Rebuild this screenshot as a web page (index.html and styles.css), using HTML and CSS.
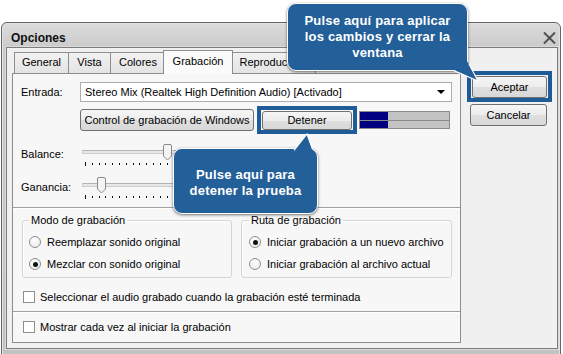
FILE: index.html
```html
<!DOCTYPE html>
<html lang="es">
<head>
  <meta charset="UTF-8" />
  <title>Opciones</title>
  <link rel="stylesheet" href="styles.css">
</head>
<body>
  <div class="window">
    <div class="titlebar">
      <span class="title">Opciones</span>
      <svg class="close" width="13" height="12" viewBox="0 0 13 12"><path d="M1 0.5 L12 11.5 M12 0.5 L1 11.5" stroke="#505050" stroke-width="2"/></svg>
    </div>
    <div class="client">
      <div class="tabctl">
        <div class="tabs">
          <div class="tab tab-general">General</div>
          <div class="tab tab-vista">Vista</div>
          <div class="tab tab-colores">Colores</div>
          <div class="tab tab-grab active">Grabación</div>
          <div class="tab tab-repro">Reproducción</div>
        </div>
        <div class="panel">
          <div class="row row-input">
            <span class="lbl">Entrada:</span>
            <div class="select">
              <span>Stereo Mix (Realtek High Definition Audio) [Activado]</span>
              <span class="arrow"></span>
            </div>
          </div>
          <div class="row row-btns">
            <button class="btn btn-control">Control de grabación de Windows</button>
            <div class="hl hl-stop"><button class="btn">Detener</button></div>
            <div class="meter">
              <div class="bar"><i style="width:28px"></i></div>
              <div class="bar"><i style="width:28px"></i></div>
            </div>
          </div>
          <div class="row row-slider">
            <span class="lbl">Balance:</span>
            <div class="slider">
              <div class="track"></div>
              <div class="ticks"></div>
              <svg class="thumb" style="left:81px" width="9" height="17" viewBox="0 0 9 17"><path d="M0.5 2 Q0.5 0.5 2 0.5 H7 Q8.5 0.5 8.5 2 V12 L4.5 16 L0.5 12 Z" fill="#f4f4f4" stroke="#8a8a8a"/></svg>
            </div>
          </div>
          <div class="row row-slider row-slider2">
            <span class="lbl">Ganancia:</span>
            <div class="slider">
              <div class="track"></div>
              <div class="ticks"></div>
              <svg class="thumb" style="left:15px" width="9" height="17" viewBox="0 0 9 17"><path d="M0.5 2 Q0.5 0.5 2 0.5 H7 Q8.5 0.5 8.5 2 V12 L4.5 16 L0.5 12 Z" fill="#f4f4f4" stroke="#8a8a8a"/></svg>
            </div>
          </div>
          <div class="sep sep-top"></div>
          <div class="groups">
            <fieldset class="group">
              <legend>Modo de grabación</legend>
              <div class="opt"><span class="radio"></span>Reemplazar sonido original</div>
              <div class="opt"><span class="radio checked"></span>Mezclar con sonido original</div>
            </fieldset>
            <fieldset class="group">
              <legend>Ruta de grabación</legend>
              <div class="opt"><span class="radio checked"></span>Iniciar grabación a un nuevo archivo</div>
              <div class="opt"><span class="radio"></span>Iniciar grabación al archivo actual</div>
            </fieldset>
          </div>
          <div class="check-row check-first"><span class="check"></span>Seleccionar el audio grabado cuando la grabación esté terminada</div>
          <div class="sep sep-bottom"></div>
          <div class="check-row"><span class="check"></span>Mostrar cada vez al iniciar la grabación</div>
        </div>
      </div>
      <div class="side">
        <div class="hl hl-ok"><button class="btn">Aceptar</button></div>
        <button class="btn btn-cancel">Cancelar</button>
      </div>
    </div>
  </div>

  <div class="callout callout-ok">
    Pulse aquí para aplicar<br>los cambios y cerrar la<br>ventana
    <svg class="tail" width="34" height="26" viewBox="0 0 34 26"><polygon points="3,10 29,22 18,2" fill="#235f99"/><polyline points="4.5,11.5 29,22 20,5" fill="none" stroke="#fff" stroke-width="1.2"/></svg>
  </div>
  <div class="callout callout-stop">
    Pulse aquí para<br>detener la prueba
    <svg class="tail" width="28" height="26" viewBox="0 0 28 26"><polygon points="4,24 19,5 26,26" fill="#235f99"/><polyline points="6,21.5 19,5 24.5,20" fill="none" stroke="#fff" stroke-width="1.2"/></svg>
  </div>
</body>
</html>
```

FILE: styles.css
```css
* {
  box-sizing: border-box;
}
body {
  margin: 0;
  width: 563px;
  height: 354px;
  overflow: hidden;
  position: relative;
  background: #fff;
  font-family: "Liberation Sans", Arial, sans-serif;
  font-size: 11px;
  color: #000;
}
.window {
  margin: 22px 0 0 1px;
  width: 560px;
  height: 340px;
  border: 1px solid #666;
  border-radius: 6px 6px 0 0;
  background: linear-gradient(#dcdcdc, #cbcbcb 24px, #c2c2c2);
  box-shadow: inset 0 0 0 1px #e2e2e2;
}
.titlebar {
  height: 24px;
  display: flex;
  align-items: center;
  justify-content: space-between;
  padding: 5px 4px 0 9px;
}
.title {
  font-size: 12px;
  font-weight: bold;
  color: #111;
}
.close {
  display: block;
  margin-top: 1px;
}
.client {
  margin: 0 2px 0 4px;
  height: 302px;
  background: #f0f0f0;
  border: 1px solid #7c7c7c;
  display: flex;
  align-items: flex-start;
  padding: 2px 0 0 5px;
  box-shadow: 0 0 0 1px #dadada;
}
.tabctl {
  width: 449px;
}
.tabs {
  display: flex;
  align-items: flex-end;
  height: 23px;
  padding-left: 2px;
}
.tab {
  height: 21px;
  padding-top: 3px;
  text-align: center;
  border: 1px solid #8c8e94;
  border-bottom: none;
  margin-right: -1px;
  background: linear-gradient(#f2f2f2, #e3e3e3);
  color: #000;
}
.tab-general {
  width: 55px;
}
.tab-vista {
  width: 43px;
}
.tab-colores {
  width: 56px;
}
.tab-repro {
  width: 85px;
}
.tab.active {
  position: relative;
  z-index: 1;
  width: 70px;
  height: 24px;
  margin: 0 -2px -1px -2px;
  padding-top: 4px;
  background: #fbfbfb;
}
.panel {
  height: 270px;
  border: 1px solid #8c8e94;
  background: #f7f7f7;
}
.row {
  display: flex;
  align-items: center;
}
.lbl {
  width: 67px;
  padding-left: 8px;
}
.row-input {
  margin-top: 8px;
}
.select {
  width: 372px;
  height: 20px;
  background: #fff;
  border: 1px solid #abadb3;
  display: flex;
  align-items: center;
  justify-content: space-between;
  padding: 0 6px 0 4px;
}
.arrow {
  width: 0;
  height: 0;
  border-left: 4px solid transparent;
  border-right: 4px solid transparent;
  border-top: 4px solid #000;
}
.row-btns {
  margin-top: 4px;
  height: 28px;
  padding-left: 67px;
}
.btn {
  font-family: inherit;
  font-size: 11px;
  color: #000;
  height: 22px;
  border: 1px solid #707070;
  border-radius: 3px;
  background: linear-gradient(#f6f6f6, #ececec 50%, #dfdfdf 51%, #d8d8d8);
  padding: 0;
  margin: 0;
}
.btn-control {
  width: 174px;
}
.hl {
  border: 4px solid #1f5b96;
  display: flex;
  align-items: center;
  justify-content: center;
}
.hl-stop {
  margin-left: 3px;
  width: 100px;
  height: 28px;
}
.hl-stop .btn {
  width: 90px;
  height: 19px;
}
.meter {
  margin-left: 2px;
  width: 91px;
  height: 18px;
  border: 1px solid #8a8a8a;
  background: #8a8a8a;
  display: flex;
  flex-direction: column;
  gap: 1px;
}
.bar {
  flex: 1;
  background: #c3c3c3;
}
.bar i {
  display: block;
  height: 100%;
  background: #000080;
}
.row-slider {
  margin-top: 9px;
  height: 28px;
  align-items: flex-start;
}
.row-slider .lbl {
  padding-top: 5px;
}
.row-slider2 {
  margin-top: 5px;
}
.slider {
  position: relative;
  margin-left: 2px;
  width: 172px;
  height: 28px;
}
.track {
  position: absolute;
  left: 0;
  right: 0;
  top: 7px;
  height: 4px;
  border: 1px solid #cdcdcd;
  border-top-color: #b4b4b4;
  background: #e8e8e8;
  border-radius: 1px;
}
.ticks {
  position: absolute;
  left: 3px;
  right: 4px;
  top: 19px;
  height: 4px;
  background: repeating-linear-gradient(90deg, #111 0 1px, transparent 1px 6.8px);
  -webkit-mask: linear-gradient(#000 0 0) left/1px 4px no-repeat, linear-gradient(#000 0 0) 0 1px/100% 2px no-repeat;
}
.thumb {
  position: absolute;
  top: 1px;
  display: block;
}
.sep {
  height: 2px;
  border-top: 1px solid #a0a0a0;
  border-bottom: 1px solid #fff;
}
.sep-top {
  margin-top: 3px;
}
.groups {
  display: flex;
  gap: 9px;
  margin-top: 4px;
  padding-left: 9px;
}
.group {
  margin: 0;
  width: 210px;
  height: 65px;
  border: 1px solid #d5d5d5;
  border-radius: 3px;
  padding: 4px 6px 0 6px;
  box-shadow: 1px 1px 0 #fff inset;
}
.group + .group {
  width: 211px;
  padding-left: 7px;
}
.group legend {
  padding: 0 2px;
  margin-left: 0;
  line-height: 14px;
}
.opt {
  display: flex;
  align-items: center;
  height: 22px;
}
.radio {
  width: 12px;
  height: 12px;
  border-radius: 50%;
  border: 1px solid #8e8f8f;
  background: radial-gradient(circle at 40% 35%, #fff, #e6e6e6);
  margin-right: 6px;
  position: relative;
}
.radio.checked::after {
  content: "";
  position: absolute;
  left: 2.5px;
  top: 2.5px;
  width: 5px;
  height: 5px;
  border-radius: 50%;
  background: #111;
}
.check-row {
  display: flex;
  align-items: center;
  height: 17px;
  padding-left: 10px;
  margin-top: 5px;
}
.check-first {
  margin-top: 10px;
}
.check {
  width: 12px;
  height: 12px;
  border: 1px solid #8e8f8f;
  background: #fff;
  margin-right: 5px;
}
.sep-bottom {
  margin-top: 6px;
}
.side {
  margin-left: 6px;
  margin-top: 21px;
  display: flex;
  flex-direction: column;
}
.hl-ok {
  width: 85px;
  height: 31px;
}
.hl-ok .btn {
  width: 75px;
  height: 22px;
}
.btn-cancel {
  width: 77px;
  margin: 2px 0 0 3px;
}
.callout {
  position: absolute;
  background: #235f99;
  border: 1px solid #fff;
  border-radius: 9px;
  box-shadow: 0 1px 3px rgba(0, 0, 0, 0.55);
  color: #fff;
  font-size: 13px;
  font-weight: bold;
  letter-spacing: 0.2px;
  line-height: 16px;
  text-align: center;
  display: flex;
  align-items: center;
  justify-content: center;
}
.callout-ok {
  left: 287px;
  top: 3px;
  width: 181px;
  height: 68px;
}
.callout-stop {
  left: 173px;
  top: 148px;
  width: 145px;
  height: 66px;
  padding-top: 3px;
}
.tail {
  position: absolute;
  display: block;
}
.callout-ok .tail {
  left: 161px;
  top: 55px;
}
.callout-stop .tail {
  left: 114px;
  top: -20px;
}
```
